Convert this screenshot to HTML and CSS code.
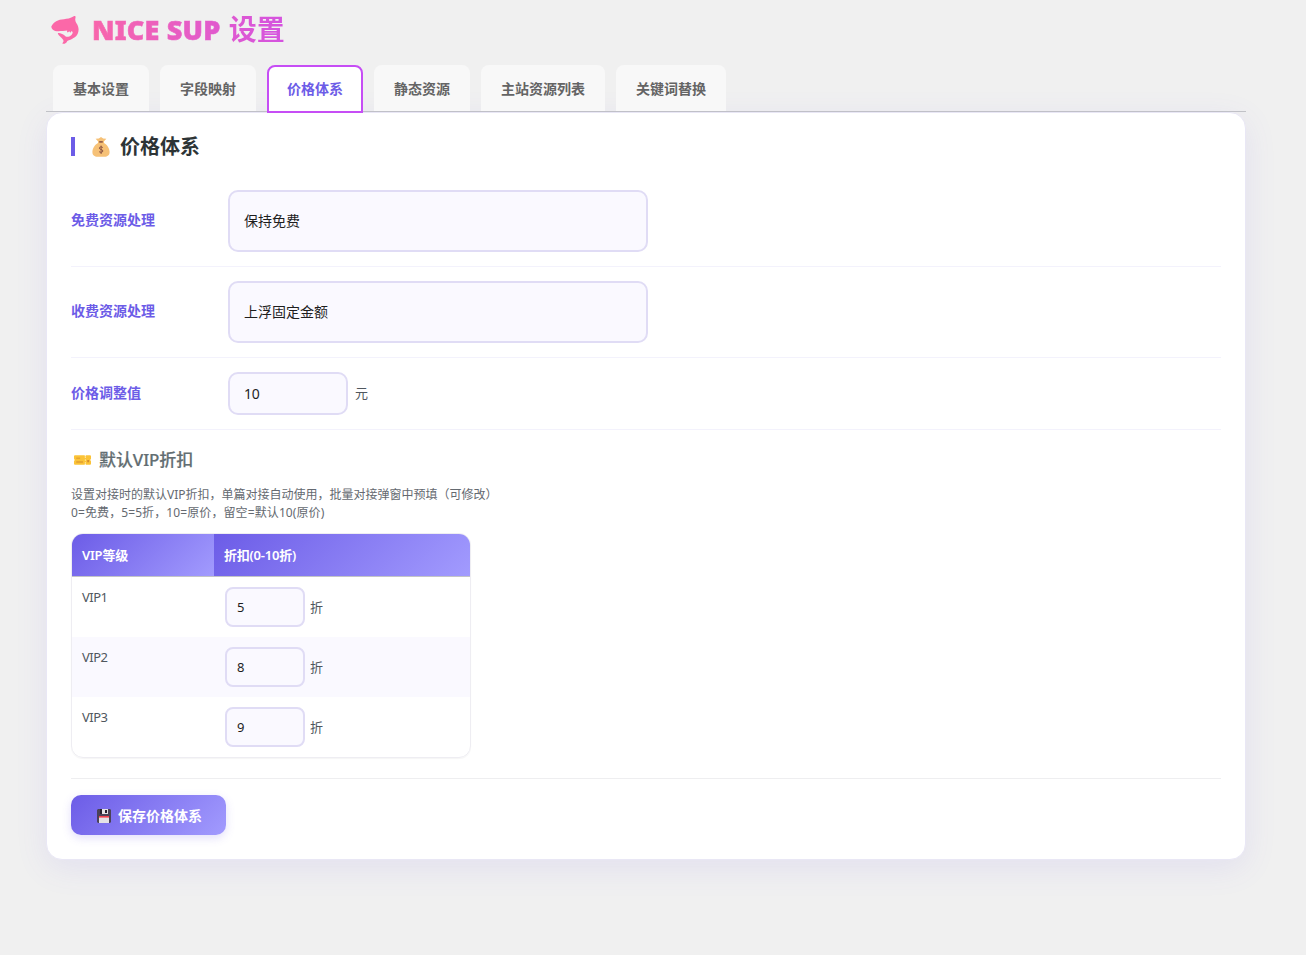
FILE: index.html
```html
<!DOCTYPE html>
<html lang="zh-CN">
<head>
  <meta charset="UTF-8">
  <meta name="viewport" content="width=device-width, initial-scale=1.0">
  <title>NICE SUP 设置</title>
  <link rel="stylesheet" href="styles.css">
</head>
<body>
  <div class="wrap">
    <h1>
      <svg class="logo" viewBox="0 0 28 28">
        <path fill="#fb68a8" d="M0.3 10.5C2.5 6 7 3.4 13 3.2C16 3 19 2.5 23.3 0.1C24.4 -0.2 24.7 0.7 24.5 1.8C24 4 24.2 5.3 25.3 7C27.6 10.3 28.3 13.8 26.8 17.4C25.1 21.5 20.5 23.1 16.3 24.9C15.6 26.8 14 28 11.5 27.7C11.2 27 12.8 26 12.5 24.8C12 21.9 7.8 20.5 6.8 17.2C8.3 16.7 12.5 18 14.7 20.6C16.4 21.1 18.8 20.6 20.5 18.9C22.2 17.2 22 15.6 20.6 14.9L19.4 16.8L18.3 15.2L16.8 16.6C16 16.2 15.8 15.2 16.3 14.5C12.5 14.7 8 15.6 4.2 14.9C2 14.3 0.3 12.6 0.3 10.5Z"/>
      </svg>
      <span class="title">NICE SUP <span class="cn">设置</span></span>
    </h1>

    <!-- 标签导航 -->
    <nav class="tabs">
      <a class="tab">基本设置</a>
      <a class="tab">字段映射</a>
      <a class="tab active">价格体系</a>
      <a class="tab">静态资源</a>
      <a class="tab">主站资源列表</a>
      <a class="tab">关键词替换</a>
    </nav>

    <div class="panel">
      <h2>
        <svg class="icon-bag" viewBox="0 0 18 20">
          <path fill="#f6c177" d="M6 4.2L3.6 1.8L6.8 1.5L9 0L11.2 1.5L14.4 1.8L12 4.2V6C15 7.5 17.6 11.5 17.6 15C17.6 18.4 15.4 19.7 12.6 19.7H5.4C2.6 19.7 0.4 18.4 0.4 15C0.4 11.5 3 7.5 6 6Z"/>
          <path fill="#7f4a40" d="M7.2 4.2H10.8V5.6H7.2Z"/>
          <path fill="none" stroke="#8d5543" stroke-width="1" d="M10.8 10.6C10.2 9.6 7.3 9.6 7.3 11.1C7.3 12.8 10.9 12 10.9 14C10.9 15.7 7.7 15.6 7 14.5M9.1 8.6V17"/>
        </svg>
        价格体系
      </h2>

      <div class="row">
        <label>免费资源处理</label>
        <div class="select">保持免费</div>
      </div>
      <div class="row">
        <label>收费资源处理</label>
        <div class="select">上浮固定金额</div>
      </div>
      <div class="row">
        <label>价格调整值</label>
        <input class="num" type="text" value="10">
        <span class="unit">元</span>
      </div>

      <h3>
        <svg class="icon-ticket" viewBox="0 0 18 10">
          <path fill="#fbc337" d="M1 0H11.4V1H12.4V0H17C17.6 0 18 .4 18 1V3.6C17.2 4 17.2 6 18 6.4V9C18 9.6 17.6 10 17 10H12.4V9H11.4V10H1C.4 10 0 9.6 0 9V6.4C.8 6 .8 4 0 3.6V1C0 .4 .4 0 1 0Z"/>
          <path fill="#d48b2f" d="M2.4 2.5H6.5V3.5H2.4ZM2.4 6.7H9.5V7.7H2.4ZM14 5H16V7.3H14Z"/>
          <path stroke="#fff0bd" stroke-width="1" stroke-dasharray="1.5 1.5" d="M12 1.3V9"/>
        </svg>
        默认VIP折扣
      </h3>
      <p class="desc">设置对接时的默认VIP折扣，单篇对接自动使用，批量对接弹窗中预填（可修改）<br><span class="hint">0=免费，5=5折，10=原价，留空=默认10(原价)</span></p>

      <!-- VIP折扣表 -->
      <table class="vip" cellspacing="0">
        <thead>
          <tr><th class="level">VIP等级</th><th>折扣(0-10折)</th></tr>
        </thead>
        <tbody>
          <tr><td>VIP1</td><td><div class="cell"><input type="text" value="5">折</div></td></tr>
          <tr><td>VIP2</td><td><div class="cell"><input type="text" value="8">折</div></td></tr>
          <tr><td>VIP3</td><td><div class="cell"><input type="text" value="9">折</div></td></tr>
        </tbody>
      </table>

      <div class="actions">
        <button class="save">
          <svg class="icon-save" viewBox="0 0 14 14">
            <path fill="#4b4257" d="M1 0H13L14 1V13L13 14H1L0 13V1Z"/>
            <path fill="#28222f" d="M3 0H11V5H3Z"/>
            <path fill="#e4e2e6" d="M5 0H11V5H5ZM2 8H12V14H2Z"/>
            <path fill="#28222f" d="M8 1H10V4H8Z"/>
            <path fill="#f4404c" d="M2 7H12V8.6H2Z"/>
          </svg>
          保存价格体系
        </button>
      </div>
    </div>
  </div>
</body>
</html>
```

FILE: styles.css
```css
* {
  box-sizing: border-box;
}

body {
  margin: 0;
  min-height: 100vh;
  background-color: #f0f0f0;
  font-family: "Noto Sans", "Noto Sans CJK SC", sans-serif;
  font-size: 13px;
  color: #50575e;
}

.wrap {
  width: 1200px;
  min-height: 100vh;
  margin: 0 0 0 46px;
}

h1 {
  display: flex;
  align-items: center;
  height: 60px;
  margin: 0;
  padding-left: 5px;
  gap: 13px;
}

.logo {
  width: 28px;
  height: 28px;
}

.title {
  padding-bottom: 2px;
  font-size: 27px;
  font-weight: 900;
  line-height: 40px;
  letter-spacing: 0.2px;
  background: linear-gradient(90deg, #f866ab, #d453e0);
  -webkit-background-clip: text;
  background-clip: text;
  -webkit-text-stroke: 0.6px transparent;
  color: transparent;
}

.title .cn {
  margin-left: 1px;
  font-size: 28px;
  font-weight: 700;
  letter-spacing: 0;
  -webkit-text-stroke: 0;
}

/* 标签导航 */
.tabs {
  display: flex;
  gap: 11px;
  height: 52px;
  padding: 5px 7px 0;
  border-bottom: 1px solid #c3c4c7;
}

.tab {
  height: 46px;
  padding: 0 20px;
  border-radius: 8px 8px 0 0;
  background-color: #f8f8f8;
  color: #646464;
  font-size: 14px;
  font-weight: 600;
  line-height: 47px;
}

.tab.active {
  position: relative;
  z-index: 1;
  height: 48px;
  padding: 0 18px;
  border: 2px solid #c64df5;
  background-color: #fff;
  color: #6c5ce7;
  line-height: 43px;
}

/* 内容面板 */
.panel {
  height: 748px;
  padding: 24px;
  border: 1px solid #e9e7f5;
  border-radius: 16px;
  background-color: #fff;
  box-shadow: 0 8px 32px rgba(108, 92, 231, 0.1);
}

h2 {
  display: flex;
  align-items: center;
  gap: 10px;
  height: 19px;
  margin: 0 0 20px;
  padding: 0 0 2px 17px;
  border-left: 4px solid #6c5ce7;
  color: #2d3436;
  font-size: 20px;
  font-weight: 600;
}

.icon-bag {
  width: 18px;
  height: 20px;
  margin-top: 2px;
}

.row {
  display: flex;
  align-items: center;
  padding: 14px 0;
  border-bottom: 1px solid #f3f2fc;
}

.row label {
  width: 157px;
  padding-bottom: 4px;
  color: #6c5ce7;
  font-size: 14px;
  font-weight: 600;
}

input,
.select {
  border: 2px solid #e0dcf5;
  border-radius: 10px;
  background-color: #faf9ff;
  color: #1e1e1e;
  font-family: inherit;
  font-size: 14px;
}

.select {
  width: 420px;
  height: 62px;
  padding: 0 14px;
  line-height: 58px;
}

.num {
  width: 120px;
  height: 43px;
  padding: 0 14px;
  letter-spacing: -0.3px;
}

.unit {
  margin-left: 7px;
  padding-bottom: 3px;
}

h3 {
  display: flex;
  align-items: center;
  gap: 8px;
  height: 24px;
  margin: 16px 0 16px 3px;
  color: #636e72;
  font-size: 17px;
  font-weight: 500;
  letter-spacing: -0.1px;
  -webkit-text-stroke: 0.2px #636e72;
}

.icon-ticket {
  width: 17px;
  height: 10px;
  margin-top: 3px;
}

.desc {
  margin: 0 0 11px;
  color: #646970;
  font-size: 12px;
  line-height: 18px;
}

.hint {
  letter-spacing: 0.1px;
}

/* VIP折扣表 */
.vip {
  width: 400px;
  height: 225px;
  border: 1px solid #eeedf2;
  border-radius: 12px;
  overflow: hidden;
  box-shadow: 0 1px 1px rgba(0, 0, 0, 0.04);
}

.vip th {
  height: 43px;
  padding: 0 10px 2px;
  border-bottom: 1px solid #c3c4c7;
  background: linear-gradient(135deg, #6c5ce7, #a29bfe);
  color: #fff;
  font-size: 13px;
  font-weight: 600;
  letter-spacing: -0.2px;
  text-align: left;
}

.vip .level {
  width: 142px;
}

.vip td {
  height: 60px;
  padding: 10px;
  letter-spacing: -0.5px;
  line-height: 21px;
  vertical-align: top;
}

.vip tr:nth-child(even) td {
  background-color: #faf9ff;
}

.cell {
  display: flex;
  align-items: center;
  gap: 5px;
  margin-left: 1px;
}

.cell input {
  width: 80px;
  height: 40px;
  padding: 0 10px;
  border-radius: 8px;
  font-size: 13px;
}

.actions {
  margin-top: 20px;
  padding-top: 16px;
  border-top: 1px solid #eeeef0;
}

.save {
  display: flex;
  align-items: center;
  justify-content: center;
  gap: 7px;
  width: 155px;
  height: 40px;
  padding: 0 5px 0 7px;
  border: 0;
  border-radius: 10px;
  background: linear-gradient(135deg, #6c5ce7, #a29bfe);
  box-shadow: 0 3px 10px rgba(108, 92, 231, 0.2);
  color: #fff;
  font-family: inherit;
  font-size: 14px;
  font-weight: 600;
}

.icon-save {
  width: 14px;
  height: 14px;
  margin-top: 2px;
}
```
